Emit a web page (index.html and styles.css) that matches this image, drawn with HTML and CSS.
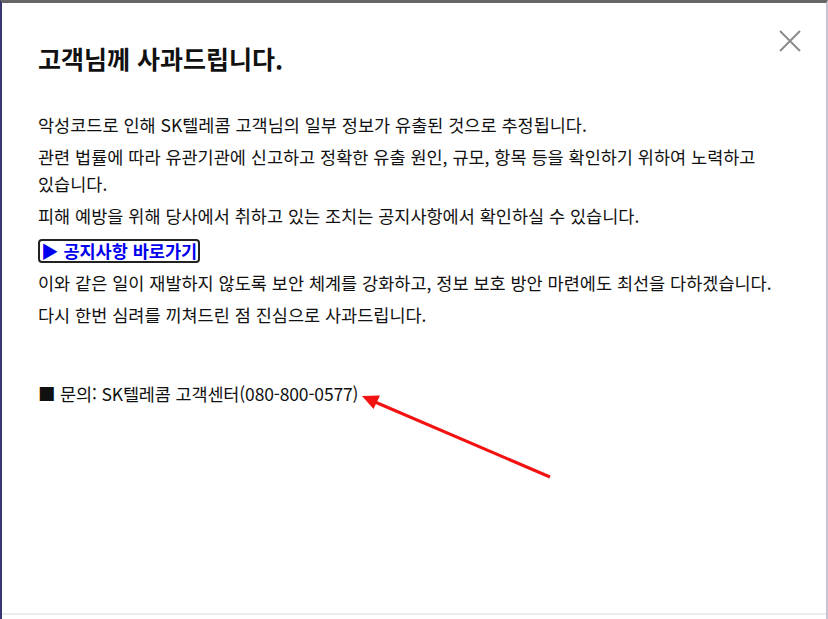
FILE: index.html
```html
<!DOCTYPE html>
<html lang="ko">

<head>
    <meta charset="UTF-8">
    <meta name="viewport" content="width=device-width, initial-scale=1.0">
    <title>고객님께 사과드립니다</title>
    <link rel="stylesheet" href="styles.css">
</head>

<body>
    <div class="backdrop">
        <!-- 안내 팝업 -->
        <div class="popup">
            <button class="close" aria-label="닫기">
                <svg width="24" height="24" viewBox="0 0 24 24">
                    <path d="M2 2 L22 22 M22 2 L2 22" stroke="#8c8c8c" stroke-width="2" fill="none" />
                </svg>
            </button>

            <h2 class="popup-title">고객님께 사과드립니다.</h2>

            <div class="popup-body">
                <p>악성코드로 인해 SK텔레콤 고객님의 일부 정보가 유출된 것으로 추정됩니다.</p>
                <p>관련 법률에 따라 유관기관에 신고하고 정확한 유출 원인, 규모, 항목 등을 확인하기 위하여 노력하고 있습니다.</p>
                <p>피해 예방을 위해 당사에서 취하고 있는 조치는 공지사항에서 확인하실 수 있습니다.</p>
                <p class="link-line"><a class="notice-link" href="#">▶ 공지사항 바로가기</a></p>
                <p>이와 같은 일이 재발하지 않도록 보안 체계를 강화하고, 정보 보호 방안 마련에도 최선을 다하겠습니다.</p>
                <p>다시 한번 심려를 끼쳐드린 점 진심으로 사과드립니다.</p>
                <p class="contact">■ 문의: SK텔레콤 고객센터(080-800-0577)</p>
            </div>

            <div class="popup-footer"></div>
        </div>

        <!-- 빨간 화살표 표시 -->
        <svg class="mark-arrow" width="828" height="619" viewBox="0 0 828 619">
            <line x1="550" y1="477" x2="375" y2="402" stroke="#f21212" stroke-width="3" />
            <polygon points="362,396 373.5,409 380,395.5" fill="#f21212" />
        </svg>
    </div>
</body>

</html>
```

FILE: styles.css
```css
html,
body {
    margin: 0;
    padding: 0;
    height: 100%;
    overflow: hidden;
}

body {
    font-family: "Noto Sans CJK KR", "Noto Sans", sans-serif;
    color: #111;
}

.backdrop {
    position: relative;
    height: 100%;
    box-sizing: border-box;
    border-top: 3px solid #666;
    border-left: 2px solid #3a3670;
    border-right: 2px solid #c6c2d0;
    background-color: #fff;
}

.popup {
    position: relative;
    height: 100%;
    display: flex;
    flex-direction: column;
    background-color: #fff;
}

.close {
    position: absolute;
    top: 26px;
    right: 24px;
    padding: 0;
    border: none;
    background: none;
    cursor: pointer;
}

.close svg {
    display: block;
}

.popup-title {
    margin: 0;
    padding: 38px 36px 0;
    font-size: 25px;
    line-height: 34px;
    font-weight: bold;
    color: #111;
}

.popup-body {
    flex: 1;
    padding: 36px 36px 0;
    font-size: 17.5px;
    line-height: 27px;
    word-break: keep-all;
}

.popup-body p {
    margin: 0 0 5px;
}

.popup-body .link-line {
    margin: 6px 0;
}

.notice-link {
    display: inline-block;
    padding: 0 1px;
    line-height: 20px;
    border: 2px solid #222;
    border-radius: 4px;
    vertical-align: middle;
    color: #0000ee;
    font-weight: bold;
    text-decoration: none;
}

.popup-body .contact {
    margin-top: 52px;
    letter-spacing: -0.15px;
}

.popup-footer {
    height: 4px;
    border-top: 2px solid #ececec;
}

/* 주석 화살표 */
.mark-arrow {
    position: absolute;
    left: -2px;
    top: -3px;
    pointer-events: none;
}
```
